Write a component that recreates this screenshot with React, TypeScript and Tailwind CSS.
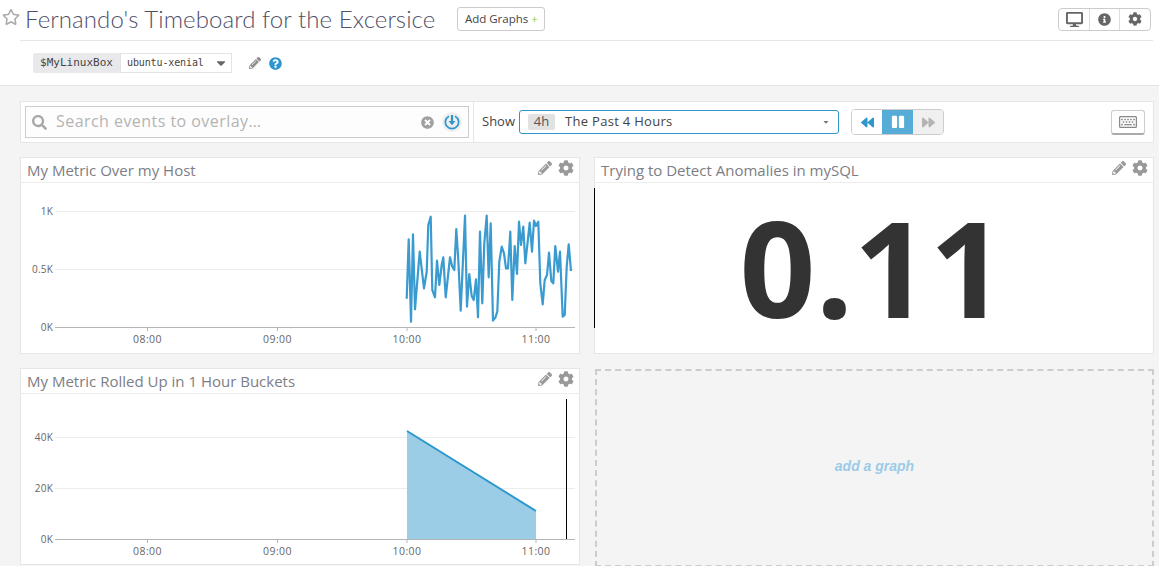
import { ReactNode } from 'react'
import {
  FaBackward,
  FaCaretDown,
  FaCog,
  FaDesktop,
  FaForward,
  FaInfoCircle,
  FaPause,
  FaPencilAlt,
  FaQuestionCircle,
  FaRegKeyboard,
  FaRegStar,
  FaSearch,
  FaTimesCircle,
} from 'react-icons/fa'

// traced from the reference, in zoom coords (3x, origin 390,200)
const raw = [
  [50, 296], [56, 118], [63, 365], [69, 103], [75, 328], [89, 155], [102, 265], [110, 215], [115, 75], [122, 50],
  [127, 270], [135, 292], [141, 182], [148, 255], [155, 195], [160, 172], [167, 292], [180, 172], [187, 200], [193, 210],
  [199, 87], [205, 180], [212, 332], [225, 47], [231, 320], [238, 222], [245, 288], [251, 300], [258, 238], [264, 352],
  [270, 95], [277, 310], [283, 130], [290, 47], [296, 232], [302, 70], [309, 362], [316, 353], [322, 335], [328, 185],
  [335, 140], [342, 160], [348, 205], [354, 205], [361, 95], [367, 300], [374, 138], [381, 222], [387, 65], [393, 135],
  [400, 80], [406, 190], [413, 125], [419, 68], [426, 155], [432, 62], [438, 78], [445, 65], [451, 250], [458, 313],
  [464, 240], [471, 225], [477, 158], [484, 243], [490, 250], [496, 138], [504, 215], [510, 155], [518, 350], [524, 345],
  [530, 200], [536, 133], [543, 213],
]

// svg local coords = page coords minus card body origin (21, 183)
const linePoints = raw.map(([x, y]) => `${(390 + x / 3 - 21).toFixed(1)},${(200 + y / 3 - 183).toFixed(1)}`).join(' ')

const ticks = [
  { x: 126.5, label: '08:00' },
  { x: 256.5, label: '09:00' },
  { x: 386, label: '10:00' },
  { x: 515, label: '11:00' },
]

function Axis({ y }: { y: number }) {
  return (
    <g>
      <line x1="34" x2="554" y1={y + 0.5} y2={y + 0.5} stroke="#b5b5b5" />
      {ticks.map((t) => (
        <g key={t.label}>
          <line x1={t.x} x2={t.x} y1={y} y2={y + 4} stroke="#b5b5b5" />
          <text x={t.x} y={y + 16} textAnchor="middle" fontSize="10.5" fill="#666" letterSpacing="0.4">
            {t.label}
          </text>
        </g>
      ))}
    </g>
  )
}

function YLabel({ y, label, grid = true }: { y: number; label: string; grid?: boolean }) {
  return (
    <g>
      {grid && <line x1="34" x2="554" y1={y + 0.5} y2={y + 0.5} stroke="#ececec" />}
      <text x="32" y={y + 4} textAnchor="end" fontSize="10" fill="#666" letterSpacing="0.2">
        {label}
      </text>
    </g>
  )
}

function Card({ title, children }: { title: string; children: ReactNode }) {
  return (
    <div className="h-[197px] bg-white border border-[#e6e6e6] flex flex-col">
      <div className="h-[25px] shrink-0 border-b border-[#ececec] flex items-center justify-between pl-[6px] pr-[5px]">
        <span className="text-[15px] text-[#7d7d85] font-['Open_Sans',sans-serif]">{title}</span>
        <div className="flex items-center gap-[6px] text-[#999] -mt-[4px]">
          <FaPencilAlt className="w-[14px] h-[14px]" />
          <FaCog className="w-[16px] h-[16px]" />
        </div>
      </div>
      <div className="flex-1 min-h-0">{children}</div>
    </div>
  )
}

export default function App() {
  return (
    <div className="w-[1159px] h-[566px] overflow-hidden bg-[#f4f4f4] font-['Open_Sans',sans-serif]">
      {/* Top header */}
      <div className="h-[86px] bg-white border-b border-[#e3e3e3] pl-[2px] pr-[6px]">
        <div className="flex items-center h-[40px]">
          <FaRegStar className="w-[18px] h-[18px] text-[#a9a9a9] -mt-[6px]" />
          <h1 className="ml-[5px] text-[24px] font-light leading-none text-[#4f4f66] -mt-[2px] font-['Lato',sans-serif] tracking-[0.09px]">
            Fernando's Timeboard for the Excersice
          </h1>
          <button className="ml-[22px] -mt-[2px] h-[24px] w-[88px] border border-[#cccccc] rounded-[3px] text-[11.5px] text-[#444] flex items-center justify-center gap-[3px]">
            Add Graphs <span className="text-[#8cc63f]">+</span>
          </button>
          <div className="ml-auto -mt-[2px] mr-[2px] h-[23px] w-[93px] flex border border-[#cccccc] rounded-[4px] text-[#666]">
            <div className="w-[31px] flex items-center justify-center border-r border-[#dddddd]">
              <FaDesktop className="w-[17px] h-[17px]" />
            </div>
            <div className="w-[30px] flex items-center justify-center border-r border-[#dddddd]">
              <FaInfoCircle className="w-[13px] h-[13px]" />
            </div>
            <div className="flex-1 flex items-center justify-center">
              <FaCog className="w-[14px] h-[14px]" />
            </div>
          </div>
        </div>
        <div className="ml-[18px] border-t border-[#e6e6e6] pt-[12px] pl-[13px] flex items-center">
          <div className="h-[20px] flex rounded-[2px] bg-[#e9e9ec] text-[11px] font-['DejaVu_Sans_Mono',monospace] text-[#444]">
            <span className="w-[87px] flex items-center justify-center">$MyLinuxBox</span>
            <div className="w-[112px] bg-white border border-[#e3e3e3] flex items-center justify-between pl-[6px] pr-[3px] text-[10px] tracking-[-0.12px]">
              <span className="-mt-[1px]">ubuntu-xenial</span>
              <FaCaretDown className="w-[14px] h-[14px] text-[#666]" />
            </div>
          </div>
          <FaPencilAlt className="ml-[17px] w-[12px] h-[12px] text-[#8d8d8d]" />
          <FaQuestionCircle className="ml-[8px] w-[13px] h-[13px] text-[#2d96cd]" />
        </div>
      </div>

      <div className="pl-[20px] pr-[5px] pt-[15px]">
        {/* Event search + time controls */}
        <div className="h-[42px] bg-white border border-[#e6e6e6] flex items-center">
          <div className="w-[453px] h-full flex items-center pl-[4px] border-r border-[#e6e6e6] shrink-0">
            <div className="w-[444px] h-[32px] bg-[#fdfdfd] border border-[#cccccc] flex items-center pl-[6px] pr-[6px]">
              <FaSearch className="w-[15px] h-[15px] text-[#a8a8a8]" />
              <span className="ml-[9px] -mt-[2px] text-[16px] text-[#b4b4b4] tracking-[0.45px]">Search events to overlay…</span>
              <FaTimesCircle className="ml-auto w-[13px] h-[13px] text-[#a0a0a0]" />
              <div className="ml-[8px] w-[20px] h-[20px] rounded-full bg-[#eeeeee] flex items-center justify-center">
                <svg viewBox="0 0 16 16" className="w-[16px] h-[16px] text-[#2d96cd]" fill="none" stroke="currentColor" strokeWidth="1.7">
                  <path d="M5 2.2 A6.6 6.6 0 1 0 11 2.2" />
                  <path d="M8 1 V9" strokeWidth="2.2" />
                  <path d="M4.6 7 H11.4 L8 11.2 Z" fill="currentColor" stroke="none" />
                </svg>
              </div>
            </div>
          </div>
          <span className="ml-[8px] text-[13px] text-[#444]">Show</span>
          <div className="ml-[4px] w-[320px] h-[24px] border border-[#2d96cd] rounded-[3px] flex items-center pl-[8px] pr-[8px] text-[13px] text-[#444]">
            <span className="h-[16px] w-[27px] bg-[#e2e2e2] rounded-[2px] flex items-center justify-center text-[#555]">4h</span>
            <span className="ml-[10px] tracking-[0.3px]">The Past 4 Hours</span>
            <FaCaretDown className="ml-auto w-[8px] h-[8px] text-[#777]" />
          </div>
          <div className="ml-[12px] w-[93px] h-[26px] flex border border-[#cccccc] rounded-[4px] overflow-hidden">
            <div className="w-[30px] bg-white flex items-center justify-center text-[#2d96cd]">
              <FaBackward className="w-[13px] h-[13px]" />
            </div>
            <div className="w-[31px] bg-[#55acd7] flex items-center justify-center text-white">
              <FaPause className="w-[14px] h-[14px]" />
            </div>
            <div className="flex-1 bg-[#f0f0f0] flex items-center justify-center text-[#b4b4b4]">
              <FaForward className="w-[13px] h-[13px]" />
            </div>
          </div>
          <div className="ml-auto mr-[8px] w-[34px] h-[25px] border border-[#cccccc] border-b-2 border-b-[#aaaaaa] rounded-[3px] flex items-center justify-center text-[#888]">
            <FaRegKeyboard className="w-[18px] h-[18px]" />
          </div>
        </div>

        {/* Graph grid */}
        <div className="mt-[14px] grid grid-cols-[560px_560px] gap-x-[14px] gap-y-[14px]">
          <Card title="My Metric Over my Host">
            <svg viewBox="0 0 558 170" className="block w-[558px] h-[170px]" fontFamily="'Open Sans', sans-serif">
              <YLabel y={28} label="1K" />
              <YLabel y={86} label="0.5K" />
              <YLabel y={144} label="0K" grid={false} />
              <Axis y={144} />
              <polyline points={linePoints} fill="none" stroke="#3a9bd0" strokeWidth="2.2" strokeLinejoin="round" />
            </svg>
          </Card>
          <Card title="Trying to Detect Anomalies in mySQL">
            <div className="relative h-full flex items-center justify-center">
              <div className="absolute left-[-1px] top-[5px] h-[140px] w-px bg-black" />
              <span className="text-[133px] leading-none font-bold text-[#333333] -mt-[3px] -ml-[3px]">0.11</span>
            </div>
          </Card>
          <Card title="My Metric Rolled Up in 1 Hour Buckets">
            <svg viewBox="0 0 558 170" className="block w-[558px] h-[170px]" fontFamily="'Open Sans', sans-serif">
              <YLabel y={43} label="40K" />
              <YLabel y={94} label="20K" />
              <YLabel y={145} label="0K" grid={false} />
              <polygon points="386,37 515,117 515,145 386,145" fill="#9bcde6" />
              <line x1="386" y1="37" x2="515" y2="117" stroke="#2d96cd" strokeWidth="2" />
              <Axis y={145} />
              <line x1="545.5" x2="545.5" y1="5" y2="145" stroke="#000" />
            </svg>
          </Card>
          <div className="h-[198px] border-2 border-dashed border-[#cccccc] flex items-center justify-center -mb-[4px] ml-[1px] mt-px">
            <span className="text-[14px] italic font-bold text-[#9ccbe8] font-['Liberation_Sans',sans-serif] -mt-[3px]">add a graph</span>
          </div>
        </div>
      </div>
    </div>
  )
}
